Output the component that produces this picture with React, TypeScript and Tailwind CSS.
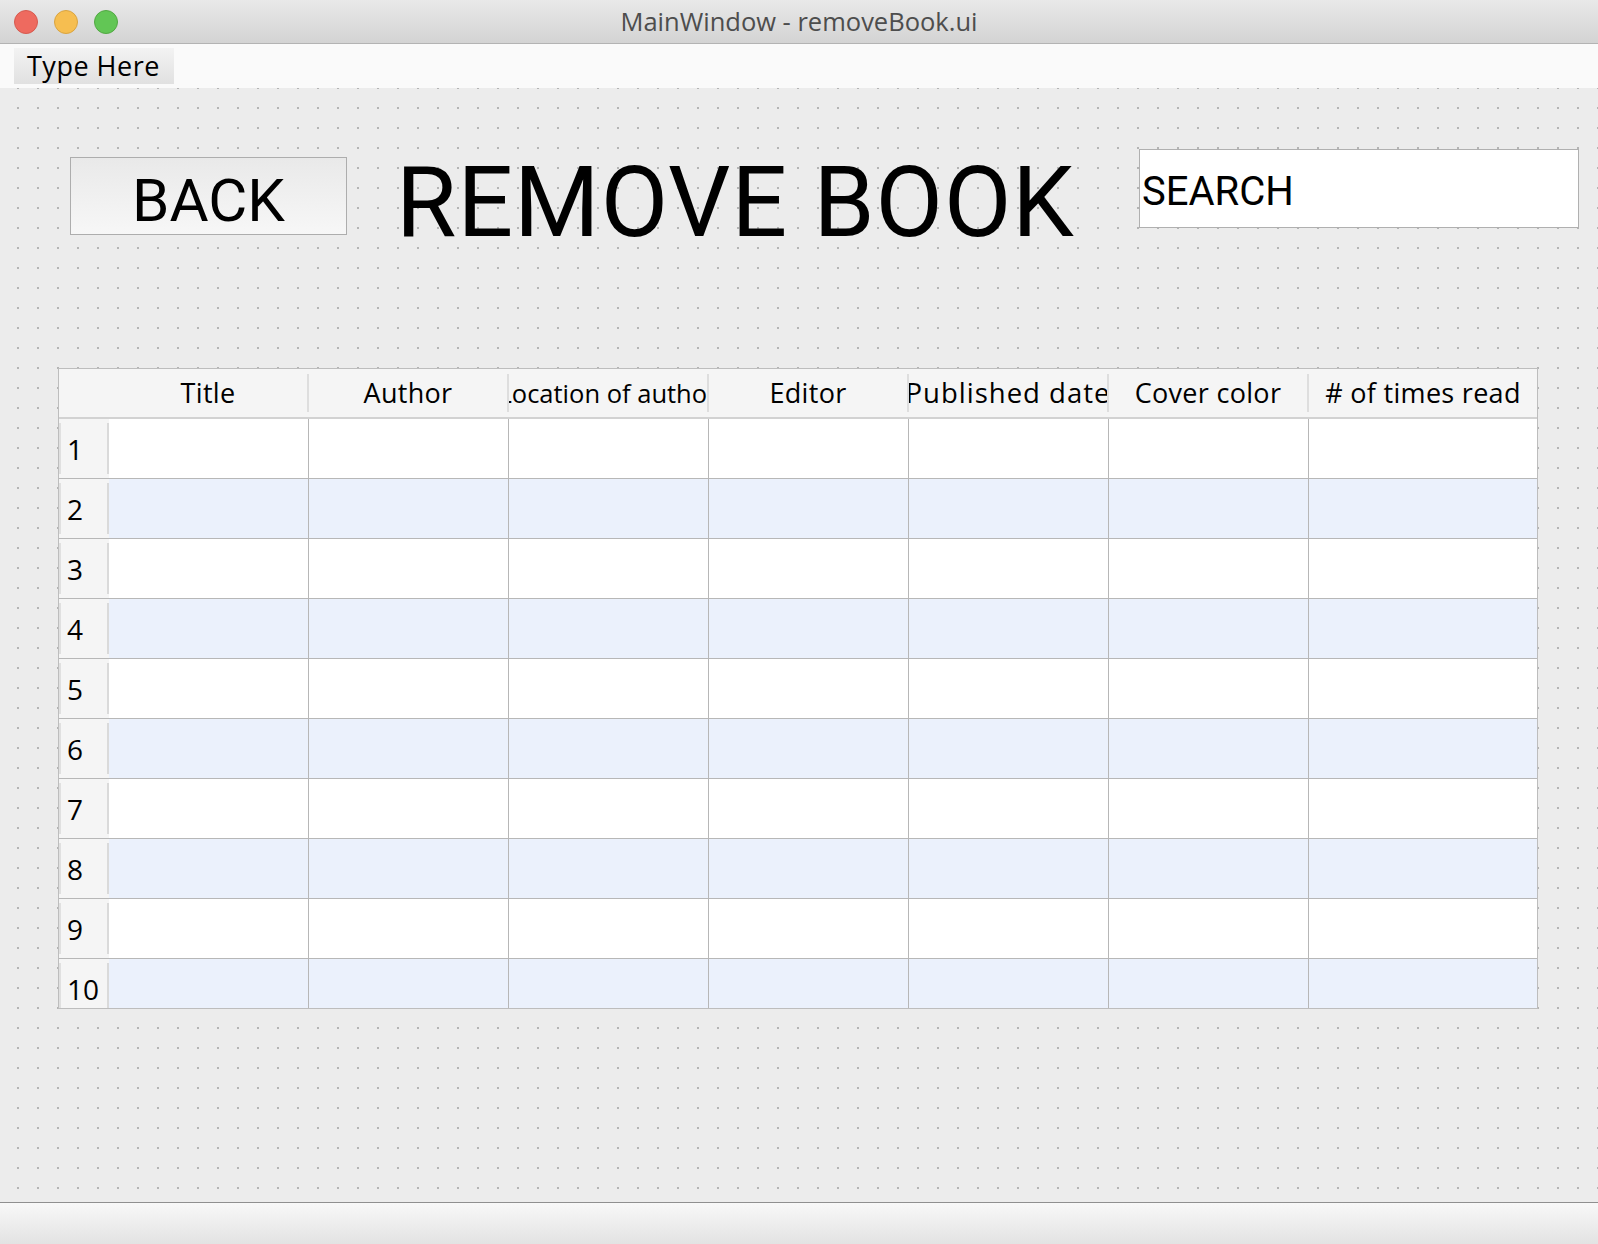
import React from 'react';

const columns = ['Title', 'Author', 'Location of author', 'Editor', 'Published date', 'Cover color', '# of times read'];
const rows = [1, 2, 3, 4, 5, 6, 7, 8, 9, 10];

function HeaderCell({ label, last }: { label: string; last?: boolean }) {
  // narrow columns clip their label on both sides, like Qt does
  const size =
    label === 'Location of author'
      ? 'text-[25.5px]'
      : label === 'Published date'
        ? 'text-[27.5px] tracking-[1px]'
        : 'text-[27px] tracking-[0.3px]';
  return (
    <div className={last ? 'flex flex-1 items-stretch' : 'flex w-[200px] items-stretch'}>
      <div className="flex flex-1 items-center justify-center overflow-hidden">
        <span className={`whitespace-nowrap text-black ${size}`}>{label}</span>
      </div>
      {!last && <div className="my-[5px] w-[2px] bg-[#dedede]" />}
    </div>
  );
}

export default function App() {
  return (
    <div
      className="flex h-[1244px] w-[1598px] flex-col overflow-hidden bg-[#ececec]"
      style={{ fontFamily: '"Open Sans", "Liberation Sans", sans-serif' }}
    >
      {/* Title bar */}
      <div className="relative flex h-[44px] shrink-0 items-center border-b border-[#b3b3b3] bg-gradient-to-b from-[#e9e9e9] to-[#d3d3d3]">
        <div className="flex items-center gap-[16px] pl-[14px]">
          <div className="h-[24px] w-[24px] rounded-full border border-[#d65a4f] bg-[#ee6a5f]" />
          <div className="h-[24px] w-[24px] rounded-full border border-[#d9a441] bg-[#f6be50]" />
          <div className="h-[24px] w-[24px] rounded-full border border-[#52a843] bg-[#62c655]" />
        </div>
        <div className="absolute inset-x-0 top-0 flex h-[43px] items-center justify-center">
          <span className="text-[25.5px] text-[#4d4d4d]">MainWindow - removeBook.ui</span>
        </div>
      </div>

      {/* Menu bar */}
      <div className="flex h-[44px] shrink-0 items-center bg-[#fafafa] pl-[14px]">
        <div className="flex h-[36px] w-[160px] items-center bg-gradient-to-b from-[#f3f3f3] to-[#e1e1e1] pl-[13px]">
          <span className="text-[27px] tracking-[0.5px] text-black">Type Here</span>
        </div>
      </div>

      {/* Central widget with designer grid */}
      <div className="flex flex-1 flex-col bg-[#ececec] bg-[image:radial-gradient(circle,#b4b4b4_1px,transparent_1.5px)] bg-[size:20px_20px] bg-[position:8px_10px] pl-[58px] pr-[19px] pt-[61px]">
        <div className="flex h-[79px] items-start">
          <button className="ml-[12px] mt-[8px] flex h-[78px] w-[277px] items-center justify-center border border-[#adadad] bg-gradient-to-b from-[#e9e9e9] to-[#f7f7f7] pt-[10px]">
            <span className="text-[60px] leading-none text-black" style={{ fontFamily: 'Roboto, sans-serif' }}>
              BACK
            </span>
          </button>
          <h1
            className="ml-[49px] mt-[5px] whitespace-nowrap text-[98px] font-normal leading-none tracking-[1px] text-black"
            style={{ fontFamily: 'Roboto, sans-serif' }}
          >
            REMOVE BOOK
          </h1>
          <div className="ml-auto flex h-[79px] w-[440px] items-center border border-[#b0b0b0] bg-white pl-[2px] pt-[7px]">
            <span className="text-[40px] leading-none text-black" style={{ fontFamily: 'Roboto, sans-serif' }}>
              SEARCH
            </span>
          </div>
        </div>

        {/* Table */}
        <div className="mt-[140px] flex h-[641px] w-[1480px] flex-col border border-[#bdbdbd] bg-white">
          <div className="flex h-[50px] shrink-0 border-b-2 border-[#d2d2d2] bg-[#f5f5f5]">
            <div className="w-[50px]" />
            {columns.map((c, i) => (
              <HeaderCell key={c} label={c} last={i === columns.length - 1} />
            ))}
          </div>
          <div className="h-[589px] overflow-hidden">
            {rows.map((r) => (
              <div
                key={r}
                className={`flex h-[60px] border-b border-[#b7b7b7] ${r % 2 === 0 ? 'bg-[#ebf1fc]' : 'bg-white'}`}
              >
                <div className="flex w-[50px] items-stretch bg-[#f5f5f5]">
                  <div className="my-[4px] w-[2px] bg-[#e0e0e0]" />
                  <div className="flex flex-1 items-center pl-[6px]">
                    <span className="text-[28px] leading-none text-black">{r}</span>
                  </div>
                  <div className="my-[4px] w-[2px] bg-[#dadada]" />
                </div>
                {columns.slice(0, 6).map((c) => (
                  <div key={c} className="w-[200px] border-r border-[#b7b7b7]" />
                ))}
                <div className="flex-1" />
              </div>
            ))}
          </div>
        </div>
      </div>

      {/* Status bar */}
      <div className="h-[42px] shrink-0 border-t border-[#8f8f8f] bg-gradient-to-b from-[#f8f8f8] to-[#e3e3e3]" />
    </div>
  );
}
